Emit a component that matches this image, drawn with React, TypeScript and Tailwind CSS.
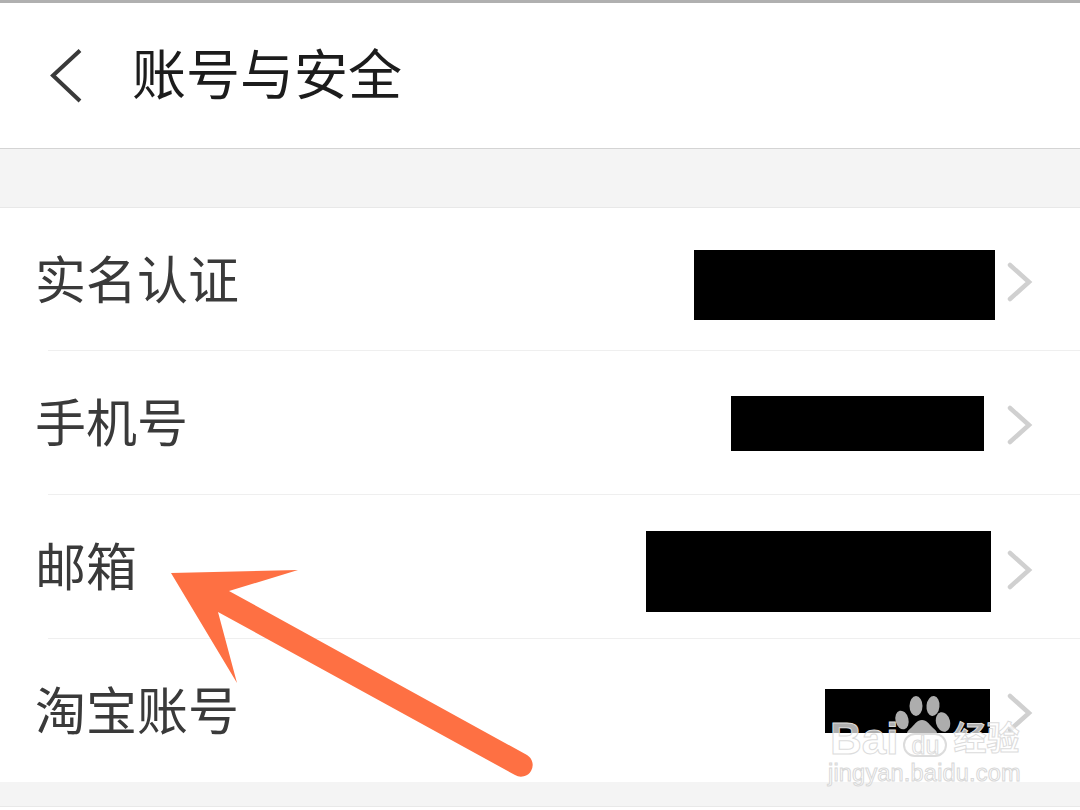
const rows = [
  { label: "实名认证", box: "w-[301px] h-[70px] mr-[12px] mt-[11px]", chevron: "mt-[4px]", height: "h-[143px]" },
  { label: "手机号", box: "w-[253px] h-[55px] mr-[23px] mt-[1px]", chevron: "mt-[4px]", height: "h-[144px]" },
  { label: "邮箱", box: "w-[345px] h-[81px] mr-[16px] mt-[8px]", chevron: "mt-[6px]", height: "h-[144px]" },
  { label: "淘宝账号", box: "w-[165px] h-[44px] mr-[17px] mt-[1px]", chevron: "mt-[4px]", height: "h-[143px]" },
];

function Watermark() {
  return (
    <div className="absolute left-[826px] top-[690px] w-[220px] h-[100px] pointer-events-none">
      <svg className="absolute left-[64px] top-[4px]" width="64" height="39" viewBox="0 0 64 39" fill="#adadad">
        <ellipse cx="26" cy="12" rx="6.5" ry="10" />
        <ellipse cx="43" cy="12" rx="6.5" ry="10" transform="rotate(6 43 12)" />
        <ellipse cx="12" cy="26" rx="6.5" ry="9.5" transform="rotate(-14 12 26)" />
        <ellipse cx="53" cy="28" rx="7" ry="10" transform="rotate(-14 53 28)" />
        <path d="M32 26c-5 0-7 4-10 7-2 2-5 4-5 6h30c0-2-3-4-5-6-3-3-5-7-10-7z" />
      </svg>
      <div className="absolute left-[4px] top-[27px] flex items-start font-['Liberation_Sans',sans-serif] font-bold text-[44px] leading-none text-white/70 [-webkit-text-stroke:1px_#dcdcdc]">
        <span>Bai</span>
        <span className="ml-[5px] mt-[16px] w-[44px] h-[24px] rounded-full border-2 border-[#dcdcdc] flex items-center justify-center text-[25px] font-normal">du</span>
        <span className="ml-[6px] mt-[3px] font-['Noto_Sans_CJK_SC',sans-serif] text-[33px] font-bold">经验</span>
      </div>
      <div className="absolute left-[2px] top-[72px] font-['Liberation_Sans',sans-serif] text-[23.5px] leading-none tracking-[0.2px] text-white/70 [-webkit-text-stroke:1px_#d8d8d8]">
        jingyan.baidu.com
      </div>
    </div>
  );
}

export default function App() {
  return (
    <div className="relative w-[1080px] h-[810px] overflow-hidden bg-white font-['Noto_Sans_CJK_SC',sans-serif]">
      <div className="h-[3px] bg-[#b0b0b0]" />
      <header className="flex items-center h-[146px] border-b border-[#d4d4d4] pl-[50px]">
        <svg width="32" height="54" viewBox="0 0 32 54" fill="none" stroke="#3a3a3a" strokeWidth="4">
          <path d="M30 1.5 3 26.5l27 25.5" />
        </svg>
        <h1 className="ml-[50px] text-[54px] leading-none font-normal text-[#1c1c1c] mb-[7px]">账号与安全</h1>
      </header>
      <div className="h-[59px] bg-[#f4f4f4] border-b border-[#e8e8e8]" />
      {rows.map((row, i) => (
        <div
          key={row.label}
          className={`relative flex items-center justify-between pl-[35px] pr-[47px] ${row.height}`}
        >
          <span className="text-[51px] leading-none text-[#3a3a3a] mb-[5px]">{row.label}</span>
          <div className="flex items-center">
            <div className={`bg-black ${row.box}`} />
            <svg className={row.chevron} width="26" height="40" viewBox="0 0 26 40" fill="none" stroke="#d0d0d0" strokeWidth="4.5" strokeLinecap="round">
              <path d="M3 3l19 17-19 17" />
            </svg>
          </div>
          {i < rows.length - 1 && <div className="absolute left-[48px] right-0 bottom-0 h-px bg-[#efefef]" />}
        </div>
      ))}
      <div className="h-[25px] bg-[#f4f4f4] border-b border-[#e8e8e8]" />
      <svg className="absolute left-0 top-0 pointer-events-none" width="1080" height="810" viewBox="0 0 1080 810">
        <path
          d="M171 573 298 570 229 591 527 755a11.5 11.5 0 0 1-12 20L218 612l19 71z"
          fill="#fe7043"
        />
      </svg>
      <Watermark />
    </div>
  );
}
